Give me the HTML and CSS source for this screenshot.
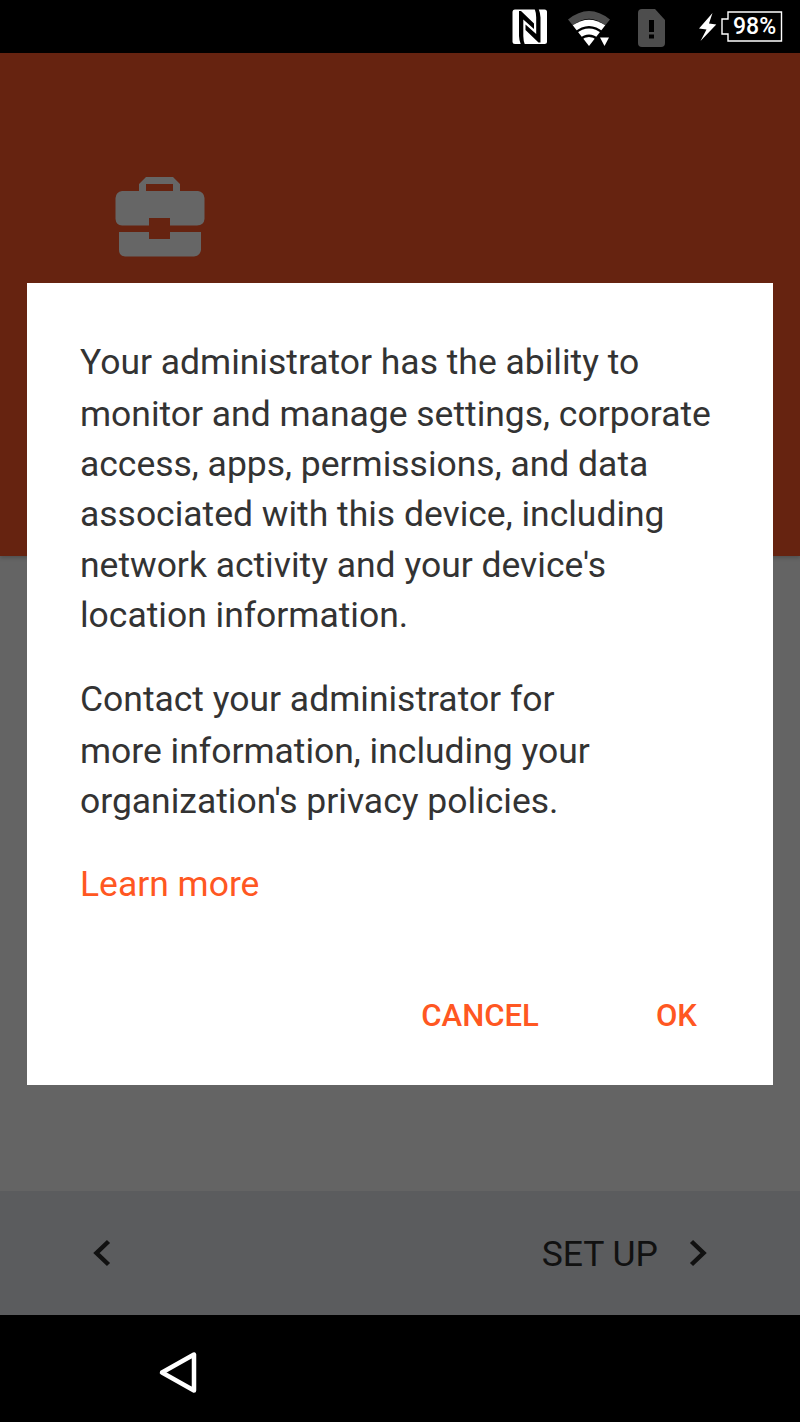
FILE: index.html
```
<!DOCTYPE html>
<html lang="en">
<head>
    <meta charset="UTF-8">
    <meta name="viewport" content="width=device-width, initial-scale=1.0">
    <title>Set up your device</title>
    <link rel="stylesheet" href="styles.css">
</head>
<body>
    <div class="screen">
        <!-- Status bar -->
        <div class="status-bar">
            <svg class="nfc" width="36" height="36" viewBox="0 0 36 36">
                <rect x="0.5" y="0.5" width="34.5" height="34.5" rx="2.5" fill="#fff"/>
                <path d="M7 2H9L22 14.500V20L11.300 10.500V27Q11.300 32 13 36H9Q7 31 7 27Z" fill="#000"/>
                <path d="M28.500 33.500H26.500L13.500 21V15.500L24.200 25V8.500Q24.200 3.500 22.500 -0.500H26.500Q28.500 4.500 28.500 8.500Z" fill="#000"/>
            </svg>
            <svg class="wifi" width="44" height="38" viewBox="0 0 44 38">
                <path d="M1 9.500Q22 -7.500 43 9.500L38.300 15.300Q22 2 5.700 15.300Z" fill="#4d4d4d"/>
                <path d="M5.700 15.300Q22 4 38.300 15.300L22 36Z" fill="#fff"/>
                <path d="M8 23Q22 11.500 36 23M13 29.500Q22 22 31 29.500" fill="none" stroke="#000" stroke-width="2.300"/>
                <path d="M31.500 25H45V38H31.500L29 29Z" fill="#000"/>
                <path d="M33 27.500H42L37.500 36Z" fill="#fff"/>
            </svg>
            <svg class="sim" width="28" height="38" viewBox="0 0 28 38">
                <path d="M4 0H17L27 11V34Q27 38 23 38H4Q0 38 0 34V4Q0 0 4 0Z" fill="#4d4d4d"/>
                <path d="M11 11H16V23H11ZM11 25.500H16V29.500H11Z" fill="#000"/>
            </svg>
            <svg class="bolt" width="18" height="28" viewBox="0 0 18 28">
                <path d="M13.500 0L0 15.500L7.500 16.500L1.500 28L17.300 11.500L10 10.500Z" fill="#fff"/>
            </svg>
            <div class="battery">
                <svg width="62" height="32" viewBox="0 0 62 32">
                    <path d="M7 1H60.500V30H7V23H1V8H7Z" fill="none" stroke="#fff" stroke-width="1.400"/>
                </svg>
                <span class="battery-level">98%</span>
            </div>
        </div>

        <!-- Header with briefcase -->
        <div class="header">
            <svg class="briefcase" width="90" height="80" viewBox="0 0 90 80">
                <path fill-rule="evenodd" d="M24 14V7L31 0H58L65 7V14H83Q89 15 89.500 21V42Q89 48 82 48.500H55V41H34V48.500H7Q1 48 0.500 42V21Q1 15 7 14ZM31 14H58V7H31Z" fill="#666"/>
                <path d="M4 55H34V62H55V55H86V73Q85 79 79 79.500H10Q4 79 4 73Z" fill="#666"/>
            </svg>
        </div>

        <div class="content"></div>

        <!-- Setup navigation -->
        <div class="footer">
            <svg class="chevron" width="20" height="28" viewBox="0 0 20 28">
                <path d="M16.500 2.500L4.500 14L16.500 25.500" fill="none" stroke="#111" stroke-width="4.500"/>
            </svg>
            <div class="setup">
                <span class="setup-label">SET UP</span>
                <svg class="chevron" width="20" height="28" viewBox="0 0 20 28">
                    <path d="M3.500 2.500L15.500 14L3.500 25.500" fill="none" stroke="#111" stroke-width="4.500"/>
                </svg>
            </div>
        </div>

        <!-- System navigation bar -->
        <div class="nav-bar">
            <svg width="40" height="44" viewBox="0 0 40 44">
                <path d="M36 4.500V40.500L4 22.500Z" fill="none" stroke="#fff" stroke-width="4.500" stroke-linejoin="round"/>
            </svg>
        </div>

        <!-- Admin notice dialog -->
        <div class="dialog">
            <p>Your administrator has the ability to<br>monitor and manage settings, corporate<br>access, apps, permissions, and data<br>associated with this device, including<br>network activity and your device's<br>location information.</p>
            <p>Contact your administrator for<br>more information, including your<br>organization's privacy policies.</p>
            <a class="learn-more">Learn more</a>
            <div class="buttons">
                <span class="button">CANCEL</span>
                <span class="button">OK</span>
            </div>
        </div>
    </div>
</body>
</html>
```
FILE: styles.css
```
* {
    box-sizing: border-box;
}
body {
    font-family: Roboto, sans-serif;
    margin: 0;
    background-color: #000;
}
svg {
    display: block;
    flex-shrink: 0;
}
.screen {
    position: relative;
    display: flex;
    flex-direction: column;
    width: 800px;
    height: 1422px;
    overflow: hidden;
}
.status-bar {
    display: flex;
    align-items: flex-start;
    height: 53px;
    padding: 9px 0 0 512px;
    background-color: #000;
}
.wifi {
    margin: 1px 0 0 19px;
}
.sim {
    margin-left: 27px;
}
.bolt {
    margin: 4px 0 0 33px;
}
.battery {
    position: relative;
    margin: 2px 0 0 4px;
}
.battery-level {
    position: absolute;
    top: 1px;
    left: 12px;
    font-size: 23px;
    font-weight: 500;
    line-height: 30px;
    color: #fff;
}
.header {
    position: relative;
    height: 503px;
    padding: 124px 0 0 115px;
    background-color: #662310;
    box-shadow: 0 2px 4px rgba(0, 0, 0, 0.2);
}
.content {
    height: 635px;
    background-color: #646464;
}
.footer {
    display: flex;
    align-items: center;
    justify-content: space-between;
    height: 124px;
    padding: 0 92px;
    background-color: #5b5c5e;
}
.setup {
    display: flex;
    align-items: center;
    gap: 30px;
    font-size: 35.5px;
    color: #111;
}
.setup-label {
    padding-top: 2px;
}
.nav-bar {
    height: 107px;
    padding: 35px 0 0 158px;
    background-color: #000;
}
.dialog {
    position: absolute;
    top: 283px;
    left: 26.67px;
    width: 746.67px;
    height: 802px;
    padding: 53px 53.33px 0;
    background-color: #fff;
    font-size: 35.47px;
    line-height: 50.2px;
    color: #333;
}
.dialog p {
    margin: 0 0 33px;
    white-space: nowrap;
}
.dialog p::first-line {
    line-height: 53px;
}
.learn-more {
    display: block;
    color: #ff5722;
}
.buttons {
    display: flex;
    justify-content: flex-end;
    gap: 117px;
    margin-top: 81px;
    padding-right: 23px;
}
.button {
    font-size: 31.1px;
    font-weight: 500;
    color: #ff5722;
}
```
